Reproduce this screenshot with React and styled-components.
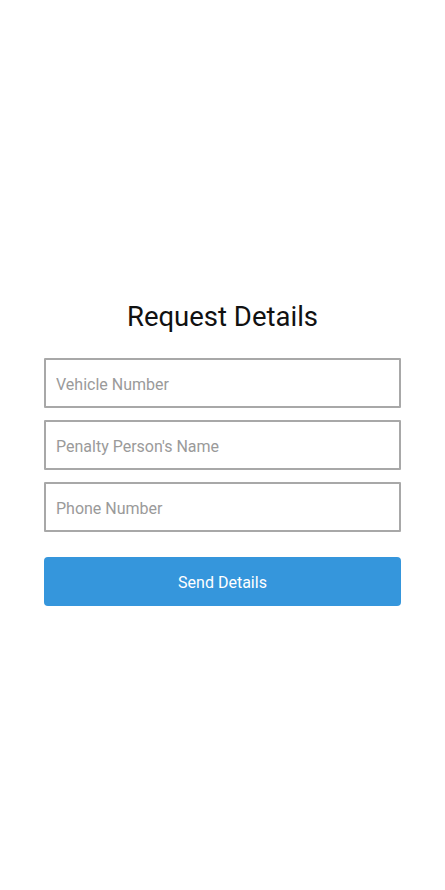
import styled, { createGlobalStyle } from "styled-components";

const GlobalStyle = createGlobalStyle`
  body {
    margin: 0;
    background: #ffffff;
    font-family: Roboto, "Liberation Sans", sans-serif;
  }
`;

export default function App() {
  return (
    <>
      <GlobalStyle />
      <Page>
        <Form onSubmit={(e) => e.preventDefault()}>
          <Title>Request Details</Title>
          <Field placeholder="Vehicle Number" />
          <Field placeholder="Penalty Person's Name" />
          <Field placeholder="Phone Number" />
          <SendButton type="submit">Send Details</SendButton>
        </Form>
      </Page>
    </>
  );
}

const Page = styled.div`
  min-height: 890px;
  display: flex;
  justify-content: center;
  padding-top: 300px;
  box-sizing: border-box;
`;

const Form = styled.form`
  width: 357px;
  display: flex;
  flex-direction: column;
  gap: 12px;
`;

const Title = styled.h1`
  margin: 0 0 13px;
  font-size: 27.5px;
  font-weight: 400;
  line-height: 33px;
  color: #111;
  text-align: center;
`;

const Field = styled.input`
  height: 50px;
  box-sizing: border-box;
  border: 2px solid #a8a8a8;
  border-radius: 1px;
  padding: 2px 10px 0;
  font-family: Roboto, "Liberation Sans", sans-serif;
  font-size: 16px;
  color: #333;
  outline: none;

  &::placeholder {
    color: #9a9a9a;
  }
`;

const SendButton = styled.button`
  margin-top: 13px;
  height: 49px;
  border: none;
  border-radius: 4px;
  background: #3596dc;
  color: #ffffff;
  font-family: Roboto, "Liberation Sans", sans-serif;
  font-size: 16px;
  padding-top: 2px;
  cursor: pointer;
`;
